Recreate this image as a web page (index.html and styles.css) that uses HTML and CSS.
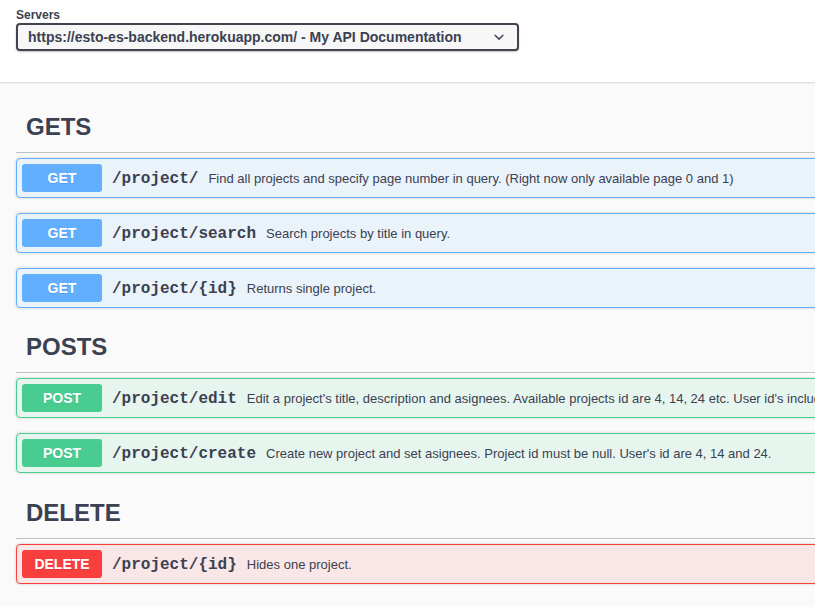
FILE: index.html
```html
<!DOCTYPE html>
<html lang="en">
<head>
<meta charset="utf-8">
<title>My API Documentation</title>
<link rel="stylesheet" href="styles.css">
</head>
<body>
<div class="page">
  <section class="scheme-container">
    <div class="servers">
      <label class="servers-label">Servers</label>
      <div class="select">
        <span class="select-text">https://esto-es-backend.herokuapp.com/ - My API Documentation</span>
        <svg class="chevron" width="20" height="20" viewBox="0 0 20 20" aria-hidden="true"><path d="M13.418 7.859a.695.695 0 01.978 0 .68.68 0 010 .969l-3.908 3.83a.697.697 0 01-.979 0l-3.908-3.83a.68.68 0 010-.969.695.695 0 01.978 0L10 11l3.418-3.141z" fill="#3b4151"/></svg>
      </div>
    </div>
  </section>

  <main class="wrapper">
    <section class="tag-section tall">
      <h3 class="tag">GETS</h3>
      <div class="opblock get">
        <span class="method">GET</span>
        <span class="path">/project/</span>
        <span class="desc">Find all projects and specify page number in query. (Right now only available page 0 and 1)</span>
      </div>
      <div class="opblock get">
        <span class="method">GET</span>
        <span class="path">/project/search</span>
        <span class="desc">Search projects by title in query.</span>
      </div>
      <div class="opblock get">
        <span class="method">GET</span>
        <span class="path">/project/{id}</span>
        <span class="desc">Returns single project.</span>
      </div>
    </section>

    <section class="tag-section">
      <h3 class="tag">POSTS</h3>
      <div class="opblock post">
        <span class="method">POST</span>
        <span class="path">/project/edit</span>
        <span class="desc">Edit a project's title, description and asignees. Available projects id are 4, 14, 24 etc. User id's include 4, 14 and 24.</span>
      </div>
      <div class="opblock post">
        <span class="method">POST</span>
        <span class="path">/project/create</span>
        <span class="desc">Create new project and set asignees. Project id must be null. User's id are 4, 14 and 24.</span>
      </div>
    </section>

    <section class="tag-section tall">
      <h3 class="tag">DELETE</h3>
      <div class="opblock delete">
        <span class="method">DELETE</span>
        <span class="path">/project/{id}</span>
        <span class="desc">Hides one project.</span>
      </div>
    </section>
  </main>
</div>
</body>
</html>
```

FILE: styles.css
```css
html, body {
  margin: 0;
  padding: 0;
  overflow: hidden;
  background: #fafafa;
}

body {
  font-family: "Liberation Sans", Arial, Helvetica, sans-serif;
  color: #3b4151;
}

.page {
  width: 1100px;
}

.scheme-container {
  background: #fff;
  box-shadow: 0 1px 2px 0 rgba(0, 0, 0, 0.15);
  padding: 8px 16px 31px;
}

.servers {
  display: flex;
  flex-direction: column;
}

.servers-label {
  font-size: 12px;
  font-weight: 700;
  line-height: 15px;
}

.select {
  width: 503px;
  height: 28px;
  box-sizing: border-box;
  border: 2px solid #41444e;
  border-radius: 4px;
  background: #f7f7f7;
  box-shadow: 0 1px 2px 0 rgba(0, 0, 0, 0.25);
  display: flex;
  align-items: center;
  justify-content: space-between;
  padding: 0 8px 0 10px;
}

.select-text {
  font-size: 14px;
  font-weight: 700;
  color: #3b4151;
}

.chevron {
  flex: none;
}

.wrapper {
  padding: 20px 16px 0;
}

.tag-section {
  display: flex;
  flex-direction: column;
}

.tag {
  margin: 0 0 5px;
  padding: 9px 20px 10px 10px;
  height: 30px;
  line-height: 30px;
  font-size: 24px;
  font-weight: 700;
  color: #3b4151;
  border-bottom: 1px solid rgba(59, 65, 81, 0.3);
}

.tall .tag {
  padding-top: 10px;
}

.opblock {
  display: flex;
  align-items: center;
  padding: 5px;
  margin-bottom: 15px;
  border: 1px solid;
  border-radius: 4px;
  box-shadow: 0 0 3px rgba(0, 0, 0, 0.19);
  white-space: nowrap;
}

.method {
  flex: none;
  width: 80px;
  padding: 6px 0;
  line-height: 16px;
  border-radius: 3px;
  text-align: center;
  font-size: 14px;
  font-weight: 700;
  color: #fff;
  text-shadow: 0 1px 0 rgba(0, 0, 0, 0.1);
}

.path {
  padding: 1px 10px 0;
  font-family: "Liberation Mono", "Courier New", monospace;
  font-size: 16px;
  font-weight: 700;
  color: #3b4151;
}

.desc {
  font-size: 13px;
  color: #3b4151;
}

.get {
  background: rgba(97, 175, 254, 0.1);
  border-color: #61affe;
}
.get .method {
  background: #61affe;
}

.post {
  background: rgba(73, 204, 144, 0.1);
  border-color: #49cc90;
}
.post .method {
  background: #49cc90;
}

.delete {
  background: rgba(249, 62, 62, 0.1);
  border-color: #f93e3e;
}
.delete .method {
  background: #f93e3e;
}
```
